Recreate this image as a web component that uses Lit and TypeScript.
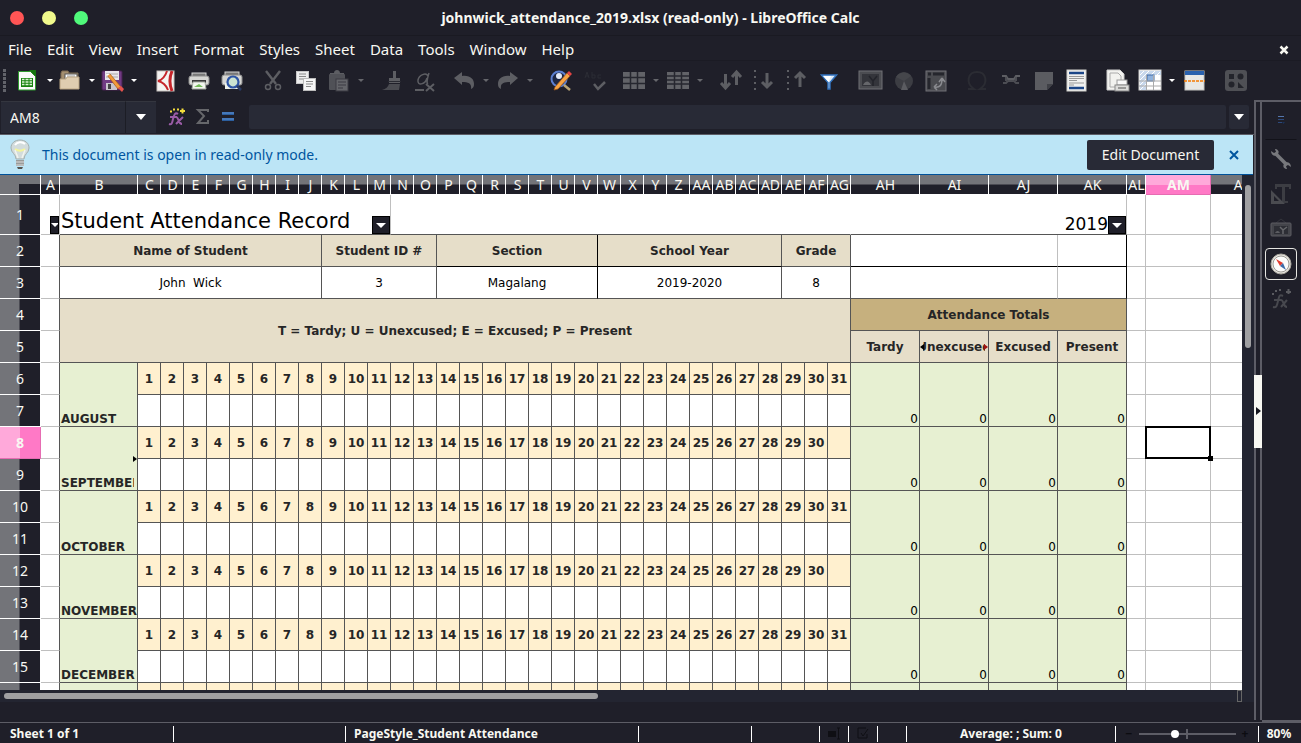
import { LitElement, html, css, svg } from "lit";
import { customElement, property } from "lit/decorators.js";

type Icon = ReturnType<typeof svg>;

const G = "#5d5e63";

const ICONS: Record<string, Icon> = {
  newsheet: svg`<path d="M1.5 1.5h12l5 5v13.500h-17z" fill="#fafafa" stroke="#2f9a2f"/><path d="M12 0h7v7z" fill="#15730f"/><rect x="4" y="8" width="12" height="9" fill="#18820f"/><path d="M5 9.500h2.500m1 0h3m1 0H15M5 12h2.500m1 0h3m1 0H15M5 14.500h2.500m1 0h3m1 0H15" stroke="#d9f3d4" stroke-width="1.300"/>`,
  open: svg`<path d="M2 3l1-2h6l1 2h9v6H2z" fill="#a48f70" stroke="#7c6a50"/><rect x="6" y="4" width="12" height="7" fill="#fff" stroke="#555"/><path d="M8 6h8" stroke="#999"/><path d="M1 9l6 0 1-2h12v12H1z" fill="#dfcdb0" stroke="#b9a482"/>`,
  save: svg`<rect x="1" y="1" width="20" height="19" rx="1" fill="#713b83" stroke="#46204f"/><rect x="4" y="1" width="14" height="9" fill="#e9e4ec"/><path d="M5 4h12M5 7h12" stroke="#aaa"/><rect x="5" y="13" width="11" height="7" fill="#c9c4cc"/><rect x="7" y="14" width="3" height="5" fill="#444"/><path d="M6 5l3-1 11 13-3 2z" fill="#f39a3c" stroke="#a35a15" stroke-width=".7"/><path d="M5 4l4 0-3 2z" fill="#fff"/><path d="M17 18l3-2 3 3-2 3z" fill="#e5534c"/>`,
  pdf: svg`<rect x="2" y="1" width="17" height="20" fill="#f4f3f2" stroke="#c9c4c0"/><path d="M12 1C10 7 7 10 3 11c5 1 8 4 10 9" fill="none" stroke="#c5252b" stroke-width="2"/><path d="M17 1c-2.500 6-2.500 14 0 20" fill="none" stroke="#c5252b" stroke-width="3"/>`,
  print: svg`<rect x="4" y="3" width="14" height="6" fill="#777" stroke="#d8d8d8"/><rect x="1" y="6" width="20" height="9" rx="2" fill="#d6d6d3" stroke="#8b8b8b"/><rect x="4" y="10" width="14" height="3" fill="#3b3b3b"/><path d="M5 12h12l1 7H4z" fill="#f2f6ee" stroke="#a5aaa1"/><path d="M6 17l5-3 4 3z" fill="#76bd5b"/>`,
  preview: svg`<rect x="4" y="2" width="14" height="6" fill="#777" stroke="#d8d8d8"/><rect x="1" y="5" width="20" height="10" rx="2" fill="#d6d6d3" stroke="#8b8b8b"/><rect x="4" y="13" width="13" height="6" fill="#eef3ea"/><circle cx="12" cy="12" r="5.500" fill="#cbe3d2" stroke="#2d55a6" stroke-width="2.200"/><path d="M16 16l4 4" stroke="#2b3c66" stroke-width="2.500"/>`,
  cut: svg`<path d="M4 1l10 13M18 1L8 14" stroke="${G}" stroke-width="2.400"/><circle cx="6" cy="17" r="2.500" fill="none" stroke="${G}" stroke-width="1.500"/><circle cx="16" cy="17" r="2.500" fill="none" stroke="${G}" stroke-width="1.500"/>`,
  copy: svg`<rect x="1.500" y="1.500" width="12" height="12" fill="#eee" stroke="#c8c8c8"/><path d="M4 4h7M4 6.500h7M4 9h5" stroke="#8a8a8a"/><rect x="8.500" y="8.500" width="12" height="12" fill="#f6f6f6" stroke="#bcbcbc"/><path d="M11 11.500h7M11 14h7M11 16.500h5" stroke="#8a8a8a"/>`,
  paste: svg`<path d="M6 3c0-4 6-4 6 0h4v4H2V3z" fill="${G}"/><rect x="1" y="4" width="16" height="16" rx="1" fill="#505157"/><rect x="8" y="9" width="12" height="12" fill="#64656a" stroke="#3a3b42"/><path d="M10 12h8M10 15h8M10 18h5" stroke="#3a3b42"/>`,
  brush: svg`<path d="M13 1h3v7h4v5H9V8h4z" fill="${G}"/><path d="M9 14h11l-1 6H2c4-1 6-3 7-6z" fill="#4a4b51"/><path d="M8 11.500h13" stroke="#2a2b33"/>`,
  clear: svg`<path d="M15 3c-2 7-3 10-1 11M14 6c-2-4-9-1-10 4-1 6 7 5 9-2" fill="none" stroke="${G}" stroke-width="1.500"/><path d="M1 20h9M12 14l8 7m0-7l-8 7" stroke="${G}" stroke-width="2"/>`,
  undo: svg`<path d="M1 8l8-6v4c8-1 12 3 12 8 0 3-1 4-3 5 1-6-3-7-9-7v3z" fill="${G}"/>`,
  redo: svg`<path d="M21 8l-8-6v4c-8-1-12 3-12 8 0 3 1 4 3 5-1-6 3-7 9-7v3z" fill="${G}"/>`,
  find: svg`<circle cx="9" cy="9" r="7.500" fill="#1d2744" stroke="#5b7fd0" stroke-width="2"/><circle cx="9" cy="6" r="3" fill="#e3eaf7"/><path d="M14 15l6 5" stroke="#b9a475" stroke-width="2.500"/><path d="M5 17L17 3l3 3L8 19l-4 1z" fill="#f7a444" stroke="#9b5418" stroke-width=".7"/><path d="M17 3l2-2 3 3-2 2z" fill="#e34444"/>`,
  spell: svg`<path d="M10 14l4 5 7-7" fill="none" stroke="${G}" stroke-width="2.500"/><path d="M1 8l2-6 2 6M2 6h3M8 2v6h3V5H8M17 5h-3v3h3" fill="none" stroke="#2b2c34"/>`,
  rows: svg`<rect x="0" y="2" width="22" height="17" fill="#626368"/><path d="M0 7.500h22M0 13.500h22M7.500 2v17M14.500 2v17" stroke="#26272f" stroke-width="1.500"/>`,
  cols: svg`<rect x="0" y="2" width="22" height="17" fill="#626368"/><path d="M7.500 1v19M14.500 1v19M0 6h22M0 10h22M0 14h22" stroke="#26272f" stroke-width="1.500"/>`,
  sort: svg`<path d="M6.500 4v13M2 13l4.500 5 4.500-5" fill="none" stroke="${G}" stroke-width="3"/><path d="M17.500 15V3M13 7l4.500-5L22 7" fill="none" stroke="${G}" stroke-width="3"/>`,
  down: svg`<path d="M2 0v22" stroke="${G}" stroke-width="2" stroke-dasharray="2 4"/><path d="M14 3v14M9 12l5 5 5-5" fill="none" stroke="${G}" stroke-width="3"/>`,
  up: svg`<path d="M2 0v22" stroke="${G}" stroke-width="2" stroke-dasharray="2 4"/><path d="M14 17V3M9 8l5-5 5 5" fill="none" stroke="${G}" stroke-width="3"/>`,
  filter: svg`<path d="M3.500 5h15L12 12.500V19h-2v-6.500z" fill="#dcebf8" stroke="#3272bd" stroke-width="1.500"/><path d="M5 6h8l-2.500 6z" fill="#fff"/>`,
  image: svg`<rect x="0" y="1" width="23" height="18" fill="#4b4c51" stroke="#707176"/><rect x="3" y="4" width="17" height="12" fill="#34353b"/><path d="M14 16v-5L10 6m4 5l4-5" stroke="#23242b" fill="none" stroke-width="1.500"/><path d="M4 15c3-5 6-4 8 0z" fill="#66676b"/>`,
  chart: svg`<circle cx="11" cy="11" r="9" fill="#3c3d43"/><path d="M11 11L8 20h7z" fill="#5b5c61"/><path d="M11 11L3 7a9 9 0 0115-1z" fill="#45464b"/>`,
  pivot: svg`<rect x="1" y="1" width="20" height="20" fill="#4a4b50" stroke="#707176"/><path d="M3 4h3M8 4h11M4 8v11" stroke="#25262d" stroke-width="3"/><path d="M9 17c6 1 8-2 8-8M9 17l3-3m-3 3l3 3M17 8l-3 4m3-4l3 4" fill="none" stroke="#8a8b90" stroke-width="1.500"/>`,
  omega: svg`<path d="M2 19h6c-9-6-6-17 3-17s12 11 3 17h6" fill="none" stroke="#2b2c33" stroke-width="2"/>`,
  link: svg`<path d="M2 6h4l2 3h6l2-3h4" fill="none" stroke="${G}" stroke-width="2"/><path d="M3 13h3l2-2h6l2 2h3M6 7v4M16 7v4" fill="none" stroke="#4c4d53" stroke-width="2"/>`,
  note: svg`<path d="M2 2h18v12l-6 6H2z" fill="#5b5c61"/><path d="M14 20v-6h6z" fill="#3f4046"/>`,
  header: svg`<rect x="1" y="0" width="19" height="21" fill="#f1f1ef" stroke="#d0d0cc"/><path d="M3 3h15M3 18h15" stroke="#1c4687" stroke-width="2.500"/><path d="M3 6.500h15M3 8.500h15M3 10.500h8M3 13h15M3 15h5" stroke="#999"/>`,
  printarea: svg`<path d="M1 0h13l4 4v16H1z" fill="#f2f2ef" stroke="#ccc"/><path d="M4 3h8l3 3v11H4z" fill="none" stroke="#aaa"/><rect x="11" y="10" width="10" height="5" fill="#f8f8f8" stroke="#999"/><rect x="9" y="15" width="14" height="6" fill="#dcdcda" stroke="#888"/><path d="M12 18h8" stroke="#555"/>`,
  freeze: svg`<rect x="0" y="0" width="22" height="20" fill="#fff" stroke="#ccc"/><path d="M1 1h21v4H7v15H1z" fill="#c8d8ec"/><path d="M1 5l4-4M1 10L10 1M1 15l6-6M1 20l6-6M12 5l4-4M18 5l3-3" stroke="#fff"/><rect x="8" y="5" width="7" height="6" fill="#8fb1dc" stroke="#3c6aa8"/><path d="M7.500 5v15M14.500 5v15M0 11h22M0 16h22" stroke="#aaa"/>`,
  split: svg`<rect x="1" y="1" width="19" height="19" fill="#e8e8e5" stroke="#c4c4c0"/><rect x="1" y="1" width="19" height="4" fill="#2a62ae"/><path d="M0 11h21" stroke="#f57900" stroke-width="1.500" stroke-dasharray="3 1"/>`,
  shapes: svg`<rect x="0" y="0" width="22" height="21" rx="3" fill="#4f5055"/><rect x="4" y="4" width="5" height="5" fill="#23242b"/><circle cx="15.500" cy="6.500" r="3" fill="#23242b"/><circle cx="6.500" cy="14.500" r="3" fill="#23242b"/><path d="M13 12v6h6z" fill="#23242b"/>`,
  wrench: svg`<path d="M5 5l12 12" stroke="#77787c" stroke-width="3.500"/><path d="M1 3c0 5 5 6 7 3S7 1 5 1l1 3-2 1zM21 19c0-5-5-6-7-3s1 5 3 5l-1-3 2-1z" fill="#77787c"/>`,
  typo: svg`<path d="M5 1h16v5h-2V4h-4v14h3v2H9v-2h3V4H7v2H5z" fill="#3c3d43"/><path d="M1 7v14h14zM4 13l5 5H4z" fill="#4a4b50" fill-rule="evenodd"/>`,
  gallery: svg`<path d="M6 5l5-4 5 4" fill="none" stroke="#34353c"/><rect x="1" y="5" width="20" height="13" rx="1" fill="#44454b" stroke="#5c5d62"/><rect x="4" y="8" width="14" height="8" fill="#2d2e35"/><path d="M13 16v-4l-3-3m3 3l4-3" fill="none" stroke="#66676b" stroke-width="1.500"/><path d="M5 15c2-3 4-2 5 0z" fill="#5c5d62"/>`,
  compass: svg`<circle cx="11" cy="11" r="10" fill="#e8e6e0" stroke="#aaa79f"/><circle cx="11" cy="11" r="8" fill="#fcfcfb" stroke="#9c9a94"/><path d="M6 6l7 4-3 3z" fill="#e33b2e"/><path d="M16 17l-6-4 3-3z" fill="#3d6ba8"/>`,
  fxgrey: svg`<path d="M13 8c-4-2-4 1-5 5s-1 7-5 6M4 12h7M11 12c3 0 2 7 6 7M17 12l-6 7" fill="none" stroke="#47484e" stroke-width="2"/><path d="M2 6h2M5 3h2M9 2h2M16 4h5M18.500 1v5" stroke="#5a5b60" stroke-width="2"/>`,
  fx: svg`<path d="M9 6c-3-2-4 1-5 5s-1 6-4 5M1 9h7M7 9c3 0 2 7 6 7M14 9l-7 7" fill="none" stroke="#9a5ca6" stroke-width="2"/><path d="M1 3.500h2M4 1.500h2M8 1.500h2M11 3h5M13.500 .5v5" stroke="#f4dc3c" stroke-width="2"/>`,
  sigma: svg`<path d="M12 4V2H2l6 6-6 7h10v-3" fill="none" stroke="#66676b" stroke-width="2"/>`,
  equals: svg`<path d="M1 5.500h12M1 11.500h12" stroke="#2c5e9e" stroke-width="3"/><path d="M1 5h12M1 11h12" stroke="#5f93d6"/>`,
  bulb: svg`<path d="M6 20c0-5-5-6-5-11C1 4 5 1 10 1s9 3 9 8c0 5-5 6-5 11z" fill="#d3dcdc" stroke="#a4b0b0"/><path d="M5 10c3 2 7 2 10 0" fill="none" stroke="#f3f59a" stroke-width="2"/><path d="M5 11l3 8m7-8l-3 8" fill="none" stroke="#f2f4ee" stroke-width="1.500"/><path d="M5 6c2-3 7-4 10-1" fill="none" stroke="#fff" stroke-width="2"/><rect x="6" y="21" width="8" height="6" fill="#999b9a"/><path d="M6 23h8M6 26h8" stroke="#dcdcdc"/><path d="M7 28h6l-1 2H8z" fill="#55544f"/>`,
  menu: svg`<path d="M1 1.500h6" stroke="#5576ac"/><path d="M1 4.500h6M1 7.500h4" stroke="#2d4a7c"/><path d="M5 7h3l-1.500 2z" fill="#1b3258"/>`,
  sel: svg`<rect x="0" y="4" width="8" height="6" fill="#0f0f14"/><path d="M9 1h3M9 12h3M10.500 1v11" stroke="#0f0f14"/>`,
  sign: svg`<path d="M9 1H1v10h9V7M4 6l2 3 5-7" fill="none" stroke="#0f0f14"/>`,
};

@customElement("ui-icon")
class UiIcon extends LitElement {
  @property() name = "";
  @property({ type: Number }) w = 22;
  @property({ type: Number }) h = 22;
  static styles = css`
    :host { display: block; flex: none; }
    svg { display: block; overflow: visible; }
  `;
  render() {
    return html`<svg width=${this.w} height=${this.h} viewBox="0 0 ${this.w} ${this.h}" aria-hidden="true">${ICONS[this.name]}</svg>`;
  }
}

/* Toolbar entries: icon, gap before it, and the drop arrow ("w" bright, "g" dimmed) */
const TOOLS: [string, string, number, string?][] = [
  ["newsheet", "New", 8, "w"], ["open", "Open", 6, "w"], ["save", "Save", 6, "w"],
  ["pdf", "Export as PDF", 18], ["print", "Print", 11], ["preview", "Print preview", 11],
  ["cut", "Cut", 19], ["copy", "Copy", 11], ["paste", "Paste", 11, "g"],
  ["brush", "Clone formatting", 16], ["clear", "Clear formatting", 12],
  ["undo", "Undo", 17, "g"], ["redo", "Redo", 8, "g"],
  ["find", "Find and replace", 17], ["spell", "Spelling", 12],
  ["rows", "Row", 17, "g"], ["cols", "Column", 8, "g"],
  ["sort", "Sort", 16], ["down", "Sort ascending", 12], ["up", "Sort descending", 11], ["filter", "AutoFilter", 10],
  ["image", "Insert image", 19], ["chart", "Insert chart", 12], ["pivot", "Pivot table", 10],
  ["omega", "Special character", 19], ["link", "Hyperlink", 12], ["note", "Comment", 11], ["header", "Headers and footers", 11],
  ["printarea", "Print area", 18], ["freeze", "Freeze rows and columns", 11, "w"], ["split", "Split window", 9],
  ["shapes", "Draw functions", 19],
];

const letters = (n: number): string => (n < 26 ? String.fromCharCode(65 + n) : "A" + String.fromCharCode(39 + n));
const COLUMNS = Array.from({ length: 40 }, (_, i) => letters(i));
const MONTHS: [string, number][] = [
  ["AUGUST", 31], ["SEPTEMBER", 30], ["OCTOBER", 31], ["NOVEMBER", 30], ["DECEMBER", 31],
];
const DAYS = Array.from({ length: 31 }, (_, i) => i + 1);

@customElement("attendance-sheet")
class AttendanceSheet extends LitElement {
  static styles = css`
    :host { display: block; background: #fff; overflow: hidden; min-width: 0; }
    table {
      table-layout: fixed; width: 1276px; border-collapse: separate; border-spacing: 0;
      font: 12px/14px "DejaVu Sans", sans-serif; color: #000;
    }
    col.rh { width: 41px; }
    col.narrow { width: 19px; }
    col.month { width: 78px; }
    col.day { width: 23px; }
    col.total { width: 69px; }
    col.wide { width: 65px; }
    th, td {
      box-sizing: border-box; padding: 0; overflow: hidden; white-space: nowrap; text-align: center;
      border: 0 solid #bfbfbf; border-width: 0 1px 1px 0;
    }
    tr { height: 32px; }
    tr.heads { height: 20px; }
    tr.title { height: 40px; }
    .col, .row, .corner { font: 14px/18px "Noto Sans", sans-serif; color: #f8f8f2; border-color: #fff; }
    .col { background: linear-gradient(#737479 9px, #4a4a52 9px, #4a4a52 10px, #1f1f29 10px); }
    .col span { display: flex; justify-content: center; padding-left: 1px; }
    .row { background: linear-gradient(90deg, #737479 19px, #4a4a52 19px, #4a4a52 20px, #1f1f29 20px); }
    .corner { background: linear-gradient(#737479, #737479) 0 0 / 19px 100% no-repeat, linear-gradient(#737479 9px, #1f1f29 9px); }
    .col.on { background: linear-gradient(#ffa9da 10px, #ff79c6 10px); border-color: #e66cb2; font-weight: bold; }
    .row.on { background: linear-gradient(90deg, #ffa9da 20px, #ff79c6 20px); border-color: #e66cb2; font-weight: bold; }
    .ink { border-color: #555; }
    .ink-r { border-right-color: #555; }
    .noline { border-right-color: #fff; }
    .under { border-bottom-color: #555; }
    .black { border-bottom-color: #000; }
    .edge { border-right-color: #000; }
    .tan { background: #e6dec9; font-weight: bold; color: #262626; }
    .gold { background: #c6b07e; font-weight: bold; color: #262626; }
    .cream { background: #fff0cf; font-weight: bold; color: #262626; }
    .green { background: #e7f0d2; }
    .mon { text-align: left; vertical-align: bottom; padding-left: 1px; font-weight: bold; color: #262626; }
    .num { text-align: right; vertical-align: bottom; padding-right: 1px; }
    .base { display: flex; align-items: flex-end; justify-content: space-between; height: 39px; }
    .big { font-size: 21px; line-height: 25px; padding-left: 1px; }
    .year { font-size: 17px; line-height: 20px; margin-left: auto; }
    .drop {
      flex: none; width: 18px; height: 18px; padding: 0; border: 1px solid #000; background: #1f1f29;
      display: grid; place-items: center; overflow: hidden;
    }
    .drop::before { content: ""; border: 5px solid transparent; border-top-color: #fff; border-bottom: 0; }
    .slim { width: 9px; margin-left: auto; }
    .slim::before { border-width: 4px 4px 0; }
    .clip { display: flex; justify-content: center; overflow: hidden; margin: 0 3px; }
    .cut { overflow: hidden; margin-right: 3px; }
    .over { position: relative; overflow: visible; }
    .tick { position: absolute; top: 13px; border: 3px solid transparent; }
    .tick.l { left: 0; border-right: 4px solid #000; border-left: 0; }
    .tick.r { right: 0; border-left: 4px solid #a01010; border-right: 0; }
    .tick.m { top: 29px; right: 0; border-left: 4px solid #000; border-right: 0; }
    .cursor { position: relative; overflow: visible; }
    .cursor::before { content: ""; position: absolute; inset: -1px -1px -1px -1px; border: 2px solid #000; }
    .cursor::after { content: ""; position: absolute; right: -3px; bottom: -3px; width: 5px; height: 5px; background: #000; }
  `;

  private rowHead(n: number) {
    return html`<th scope="row" class="row ${n === 8 ? "on" : ""}">${n}</th>`;
  }

  private tail(n: number) {
    return html`<td></td><td class=${n === 8 ? "cursor" : ""}></td><td></td>`;
  }

  private month([name, last]: [string, number], i: number) {
    const n = 6 + i * 2;
    return html`
      <tr>
        ${this.rowHead(n)}<td class="ink-r"></td>
        <td rowspan="2" class="green ink mon over">${name === "SEPTEMBER" ? html`<div class="cut">${name}</div><span class="tick m"></span>` : name}</td>
        ${DAYS.map((d) => html`<td class="cream ink">${d <= last ? d : ""}</td>`)}
        ${[0, 1, 2, 3].map(() => html`<td rowspan="2" class="green ink num">0</td>`)}
        ${this.tail(n)}
      </tr>
      <tr>
        ${this.rowHead(n + 1)}<td class="ink-r"></td>
        ${DAYS.map(() => html`<td class="ink"></td>`)}
        ${this.tail(n + 1)}
      </tr>`;
  }

  render() {
    return html`
      <table>
        <colgroup>
          <col class="rh"><col class="narrow"><col class="month">
          ${DAYS.map(() => html`<col class="day">`)}
          <col class="total"><col class="total"><col class="total"><col class="total">
          <col class="narrow"><col class="wide"><col class="wide">
        </colgroup>
        <tr class="heads">
          <th class="corner"></th>
          ${COLUMNS.map((c) => html`<th scope="col" class="col ${c === "AM" ? "on" : ""}"><span>${c}</span></th>`)}
        </tr>
        <tr class="title">
          ${this.rowHead(1)}
          <td><div class="base"><button class="drop slim" aria-label="Filter column A"></button></div></td>
          <td colspan="12" class="under"><div class="base"><span class="big">Student Attendance Record</span><button class="drop" aria-label="Filter title"></button></div></td>
          <td colspan="20" class="under noline"></td>
          <td colspan="4" class="under"><div class="base"><span class="year">2019</span><button class="drop" aria-label="Filter year"></button></div></td>
          ${this.tail(1)}
        </tr>
        <tr>
          ${this.rowHead(2)}<td class="ink-r"></td>
          <td colspan="9" class="tan ink">Name of Student</td>
          <td colspan="5" class="tan ink">Student ID #</td>
          <td colspan="7" class="tan ink black edge">Section</td>
          <td colspan="8" class="tan ink black">School Year</td>
          <td colspan="3" class="tan ink">Grade</td>
          <td colspan="3" class="black"></td><td class="black edge"></td>
          ${this.tail(2)}
        </tr>
        <tr>
          ${this.rowHead(3)}<td class="ink-r"></td>
          <td colspan="9" class="ink">John&nbsp; Wick</td>
          <td colspan="5" class="ink">3</td>
          <td colspan="7" class="ink edge">Magalang</td>
          <td colspan="8" class="ink">2019-2020</td>
          <td colspan="3" class="ink">8</td>
          <td colspan="3" class="under"></td><td class="under edge"></td>
          ${this.tail(3)}
        </tr>
        <tr>
          ${this.rowHead(4)}<td class="ink-r"></td>
          <td colspan="32" rowspan="2" class="tan ink">T = Tardy; U = Unexcused; E = Excused; P = Present</td>
          <td colspan="4" class="gold ink">Attendance Totals</td>
          ${this.tail(4)}
        </tr>
        <tr>
          ${this.rowHead(5)}<td class="ink-r"></td>
          <td class="tan ink">Tardy</td>
          <td class="tan ink over"><div class="clip">Unexcused</div><span class="tick l"></span><span class="tick r"></span></td>
          <td class="tan ink">Excused</td>
          <td class="tan ink">Present</td>
          ${this.tail(5)}
        </tr>
        ${MONTHS.map((m, i) => this.month(m, i))}
        <tr>
          <th class="row"></th><td class="ink-r"></td><td class="green ink"></td>
          ${DAYS.map(() => html`<td class="cream ink"></td>`)}
          ${[0, 1, 2, 3].map(() => html`<td class="green ink"></td>`)}
          ${this.tail(16)}
        </tr>
      </table>`;
  }
}

@customElement("app-root")
class AppRoot extends LitElement {
  static styles = css`
    :host {
      display: grid; grid-template-rows: 36px 25px 39px 1fr 21px; height: 100vh; overflow: hidden;
      background: #1f1f29; color: #f8f8f2; font: 14px/20px "Noto Sans", sans-serif;
    }
    * { box-sizing: border-box; }
    button { font: inherit; color: inherit; background: none; border: 0; padding: 0; display: block; }
    a { color: inherit; text-decoration: none; }
    .titlebar { display: grid; grid-template-columns: 1fr auto 1fr; align-items: center; padding: 0 10px; border-bottom: 1px solid #1a1a22; }
    .lights { display: flex; gap: 18px; }
    .light { width: 14px; height: 14px; border-radius: 50%; }
    .red { background: #ff5555; } .yellow { background: #f1fa8c; } .green { background: #50fa7b; }
    h1 { font: bold 14px/20px "Noto Sans", sans-serif; margin: 0; }
    .menubar { display: flex; align-items: center; gap: 15px; padding: 1px 12px 0 8px; border-bottom: 1px solid #1b1b24; font-size: 15px; }
    .close { margin-left: auto; }
    .toolbar { display: flex; align-items: center; min-width: 0; overflow: hidden; padding-left: 3px; }
    .grip { width: 3px; height: 24px; flex: none; margin-right: 3px; background: repeating-linear-gradient(#62636a 0 3px, transparent 3px 4px); }
    .tool { display: flex; align-items: center; flex: none; }
    .arrow { border: 3px solid transparent; border-top-color: #fff; border-bottom: 0; margin-left: 8px; }
    .arrow.g { border-top-color: #66676c; }
    .main { display: grid; grid-template-columns: minmax(0, 1fr) 8px 39px; min-height: 0; }
    .work { display: grid; grid-template-rows: 35px 40px minmax(0, 1fr) 32px; min-height: 0; }
    .formula { display: flex; align-items: center; padding: 0 5px 1px 1px; border-bottom: 1px solid #5d5d66; }
    input { font: inherit; color: inherit; border: 0; outline: 0; background: #282a36; min-width: 0; }
    .namebox { width: 125px; height: 32px; padding: 0 9px; border-right: 1px solid #1c1d25; border-top: 1px solid #34363f; }
    .namedrop { width: 30px; height: 32px; background: #282a36; border-top: 1px solid #34363f; }
    .big { display: block; margin: 0 auto; width: 0; border: 5px solid transparent; border-top: 6px solid #fff; border-bottom: 0; }
    .fxs { display: flex; align-items: center; gap: 10px; padding: 0 14px 0 13px; }
    .line { flex: 1; height: 24px; border-radius: 2px; padding: 0 6px; }
    .expand { width: 20px; height: 24px; margin-left: 3px; background: #282a36; border-radius: 2px; }
    .banner { display: flex; align-items: center; gap: 12px; margin-right: 1px; padding: 0 11px 0 10px; background: #bce5f6; color: #00559f; border-bottom: 1px solid #00529a; }
    .edit { margin-left: auto; width: 127px; height: 30px; border-radius: 2px; background: #282a36; color: #f8f8f2; }
    .area { display: grid; grid-template-columns: minmax(0, 1fr) 12px; min-height: 0; }
    .vbar { background: #232531; padding: 10px 3px 0; }
    .vbar::before { content: ""; display: block; width: 6px; height: 163px; border-radius: 3px; background: #a0a0a2; }
    .hbar { height: 12px; display: flex; align-items: center; justify-content: space-between; background: #232531; padding: 0 12px 0 4px; }
    .hthumb { width: 48%; height: 6px; border-radius: 3px; background: #a0a0a2; }
    .hend { width: 5px; height: 12px; border: 1px solid #666; }
    .split { border: 2px solid #5d5d66; border-bottom: 0; margin-bottom: 2px; display: flex; align-items: center; }
    .handle { width: 8px; margin: 0 -2px; flex: none; height: 73px; background: #f8f8f2; display: grid; place-items: center; }
    .handle::before { content: ""; border: 4px solid transparent; border-left: 5px solid #14141c; border-right: 0; }
    .side { border: solid #5d5d66; border-width: 2px 0; display: flex; flex-direction: column; align-items: center; padding: 2px 1px 0 0; gap: 3px; }
    .tab { width: 32px; height: 32px; display: grid; place-items: center; border-radius: 4px; border: 1px solid transparent; }
    .tab.on { border-color: #e6e6e2; }
    .first { height: 36px; padding-bottom: 6px; border-bottom: 1px solid #121219; border-radius: 0; }
    .status { display: flex; align-items: center; padding-top: 1px; border-top: 1px solid #5d5d66; font: bold 12px/16px "Noto Sans", sans-serif; }
    .cell { height: 16px; border-right: 1px solid #fff; flex: none; display: flex; align-items: center; justify-content: center; white-space: nowrap; }
    .left { justify-content: flex-start; padding-left: 8px; }
    .c1 { width: 174px; padding-left: 10px; } .c2 { width: 172px; } .c3 { width: 293px; } .c4 { width: 113px; }
    .c5 { width: 68px; } .c6 { width: 29px; } .c7 { flex: 1; }
    .zoom { width: 143px; gap: 6px; color: #0c0c11; }
    input[type="range"] { appearance: none; width: 97px; height: 14px; margin: 0; background: linear-gradient(#5d5d66, #5d5d66) 0 50% / 100% 2px no-repeat, linear-gradient(#5d5d66, #5d5d66) 50% 50% / 2px 10px no-repeat; }
    input[type="range"]::-webkit-slider-thumb { appearance: none; width: 8px; height: 8px; border-radius: 50%; background: #fff; }
    .pct { width: 42px; padding-right: 2px; text-align: center; }
  `;

  render() {
    return html`
      <header class="titlebar">
        <div class="lights"><button class="light red" aria-label="Close"></button><button class="light yellow" aria-label="Minimize"></button><button class="light green" aria-label="Maximize"></button></div>
        <h1>johnwick_attendance_2019.xlsx (read-only) - LibreOffice Calc</h1>
      </header>
      <nav class="menubar">
        ${["File", "Edit", "View", "Insert", "Format", "Styles", "Sheet", "Data", "Tools", "Window", "Help"].map((m) => html`<a href="#">${m}</a>`)}
        <button class="close" aria-label="Close document"><svg width="10" height="10"><path d="M1.500 1.500l7 7m0-7l-7 7" stroke="#f8f8f2" stroke-width="2.500"/></svg></button>
      </nav>
      <div class="toolbar">
        <span class="grip"></span>
        ${TOOLS.map(([icon, label, gap, arrow]) => html`<button class="tool" aria-label=${label} style="margin-left:${gap}px"><ui-icon name=${icon}></ui-icon>${arrow ? html`<span class="arrow ${arrow}"></span>` : ""}</button>`)}
      </div>
      <div class="main">
        <div class="work">
          <div class="formula">
            <input class="namebox" aria-label="Name box" .value=${"AM8"}>
            <button class="namedrop" aria-label="Cell ranges"><span class="big"></span></button>
            <div class="fxs">
              <button aria-label="Function wizard"><ui-icon name="fx" w="17" h="18"></ui-icon></button>
              <button aria-label="Sum"><ui-icon name="sigma" w="15" h="17"></ui-icon></button>
              <button aria-label="Formula"><ui-icon name="equals" w="14" h="17"></ui-icon></button>
            </div>
            <input class="line" aria-label="Input line">
            <button class="expand" aria-label="Expand formula bar"><span class="big"></span></button>
          </div>
          <div class="banner">
            <ui-icon name="bulb" w="20" h="31"></ui-icon><span>This document is open in read-only mode.</span>
            <button class="edit">Edit Document</button>
            <button aria-label="Dismiss"><svg width="16" height="10"><path d="M4 1l8 8m0-8l-8 8" stroke="#00559f" stroke-width="2"/></svg></button>
          </div>
          <div class="area"><attendance-sheet></attendance-sheet><div class="vbar"></div></div>
          <div><div class="hbar"><span class="hthumb"></span><span class="hend"></span></div></div>
        </div>
        <div class="split"><button class="handle" aria-label="Hide sidebar"></button></div>
        <aside class="side">
          <button class="tab first" aria-label="Sidebar settings"><ui-icon name="menu" w="8" h="9"></ui-icon></button>
          ${["wrench", "typo", "gallery", "compass", "fxgrey"].map((n) => html`<button class="tab ${n === "compass" ? "on" : ""}" aria-label=${n}><ui-icon name=${n}></ui-icon></button>`)}
        </aside>
      </div>
      <footer class="status">
        <span class="cell left c1">Sheet 1 of 1</span><span class="cell c2"></span>
        <span class="cell left c3">PageStyle_Student Attendance</span><span class="cell c4"></span>
        <span class="cell c5"></span>
        <span class="cell c6"><ui-icon name="sel" w="12" h="13"></ui-icon></span>
        <span class="cell c6"><ui-icon name="sign" w="12" h="13"></ui-icon></span>
        <span class="cell c6"></span>
        <span class="cell c7">Average: ; Sum: 0</span>
        <span class="cell zoom"><span>−</span><input type="range" min="0" max="100" value="36" aria-label="Zoom"><span>+</span></span>
        <span class="pct">80%</span>
      </footer>`;
  }
}
